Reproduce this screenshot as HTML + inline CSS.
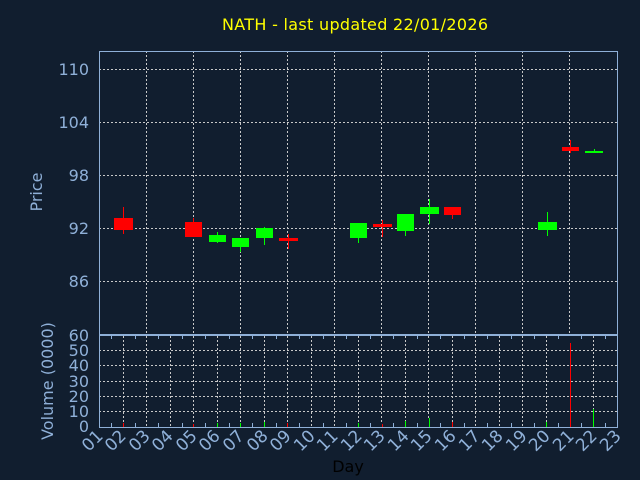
<html><body style="margin:0;background:#111e2f">
<svg width="640" height="480" xmlns="http://www.w3.org/2000/svg" style="display:block">
<rect width="640" height="480" fill="#111e2f"/>
<g stroke="#c8c8c8" stroke-dasharray="2,2" stroke-width="1">
<line x1="99" x2="617" y1="69.5" y2="69.5"/><line x1="99" x2="617" y1="122.5" y2="122.5"/><line x1="99" x2="617" y1="175.5" y2="175.5"/><line x1="99" x2="617" y1="228.5" y2="228.5"/><line x1="99" x2="617" y1="281.5" y2="281.5"/>
<line x1="99" x2="617" y1="350.5" y2="350.5"/><line x1="99" x2="617" y1="365.5" y2="365.5"/><line x1="99" x2="617" y1="381.5" y2="381.5"/><line x1="99" x2="617" y1="396.5" y2="396.5"/><line x1="99" x2="617" y1="411.5" y2="411.5"/>
<line x1="146.5" x2="146.5" y1="51" y2="334"/><line x1="193.5" x2="193.5" y1="51" y2="334"/><line x1="240.5" x2="240.5" y1="51" y2="334"/><line x1="287.5" x2="287.5" y1="51" y2="334"/><line x1="334.5" x2="334.5" y1="51" y2="334"/><line x1="381.5" x2="381.5" y1="51" y2="334"/><line x1="428.5" x2="428.5" y1="51" y2="334"/><line x1="475.5" x2="475.5" y1="51" y2="334"/><line x1="522.5" x2="522.5" y1="51" y2="334"/><line x1="569.5" x2="569.5" y1="51" y2="334"/>
<line x1="123.5" x2="123.5" y1="336" y2="427"/><line x1="146.5" x2="146.5" y1="336" y2="427"/><line x1="170.5" x2="170.5" y1="336" y2="427"/><line x1="193.5" x2="193.5" y1="336" y2="423"/><line x1="217.5" x2="217.5" y1="336" y2="423"/><line x1="240.5" x2="240.5" y1="336" y2="423"/><line x1="264.5" x2="264.5" y1="336" y2="422"/><line x1="287.5" x2="287.5" y1="336" y2="423"/><line x1="311.5" x2="311.5" y1="336" y2="427"/><line x1="334.5" x2="334.5" y1="336" y2="427"/><line x1="358.5" x2="358.5" y1="336" y2="423"/><line x1="381.5" x2="381.5" y1="336" y2="424"/><line x1="405.5" x2="405.5" y1="336" y2="421"/><line x1="428.5" x2="428.5" y1="336" y2="418"/><line x1="452.5" x2="452.5" y1="336" y2="422"/><line x1="475.5" x2="475.5" y1="336" y2="427"/><line x1="499.5" x2="499.5" y1="336" y2="427"/><line x1="522.5" x2="522.5" y1="336" y2="427"/><line x1="546.5" x2="546.5" y1="336" y2="422"/><line x1="593.5" x2="593.5" y1="336" y2="409"/>
</g>
<g fill="none" stroke="#8fb0d8" stroke-width="1">
<rect x="99.5" y="51.5" width="518" height="283"/>
<rect x="99.5" y="335.5" width="518" height="92"/>
</g>
<g stroke="#8fb0d8" stroke-width="1">
<path d="M111.5 335v4M135.5 335v4M158.5 335v4M182.5 335v4M205.5 335v4M229.5 335v4M252.5 335v4M276.5 335v4M299.5 335v4M323.5 335v4M346.5 335v4M370.5 335v4M393.5 335v4M417.5 335v4M440.5 335v4M464.5 335v4M487.5 335v4M511.5 335v4M534.5 335v4M558.5 335v4M581.5 335v4M605.5 335v4M111.5 427v-4M135.5 427v-4M158.5 427v-4M182.5 427v-4M205.5 427v-4M229.5 427v-4M252.5 427v-4M276.5 427v-4M299.5 427v-4M323.5 427v-4M346.5 427v-4M370.5 427v-4M393.5 427v-4M417.5 427v-4M440.5 427v-4M464.5 427v-4M487.5 427v-4M511.5 427v-4M534.5 427v-4M558.5 427v-4M581.5 427v-4M605.5 427v-4"/>
</g>
<g fill="#ff0000" stroke="#ff0000">
<line x1="123.5" x2="123.5" y1="207" y2="234"/><rect x="114" y="218" width="19" height="12" stroke="none"/>
<line x1="193.5" x2="193.5" y1="218" y2="237"/><rect x="185" y="222" width="17" height="15" stroke="none"/>
<line x1="288.5" x2="288.5" y1="234" y2="249"/><rect x="279" y="238" width="19" height="3" stroke="none"/>
<line x1="382.5" x2="382.5" y1="220" y2="237"/><rect x="373" y="224" width="19" height="3" stroke="none"/>
<line x1="452.5" x2="452.5" y1="207" y2="219"/><rect x="444" y="207" width="17" height="8" stroke="none"/>
<line x1="570.5" x2="570.5" y1="140" y2="153"/><rect x="562" y="147" width="17" height="4" stroke="none"/>
</g>
<g fill="#00ff00" stroke="#00ff00">
<line x1="217.5" x2="217.5" y1="232" y2="243"/><rect x="209" y="235" width="17" height="7" stroke="none"/>
<line x1="240.5" x2="240.5" y1="238" y2="252"/><rect x="232" y="238" width="17" height="9" stroke="none"/>
<line x1="264.5" x2="264.5" y1="227" y2="245"/><rect x="256" y="228" width="17" height="10" stroke="none"/>
<line x1="358.5" x2="358.5" y1="223" y2="243"/><rect x="350" y="223" width="17" height="15" stroke="none"/>
<line x1="405.5" x2="405.5" y1="214" y2="236"/><rect x="397" y="214" width="17" height="17" stroke="none"/>
<line x1="429.5" x2="429.5" y1="199" y2="224"/><rect x="420" y="207" width="19" height="7" stroke="none"/>
<line x1="547.5" x2="547.5" y1="212" y2="236"/><rect x="538" y="222" width="19" height="8" stroke="none"/>
<line x1="594.5" x2="594.5" y1="149" y2="153"/><rect x="585" y="151" width="18" height="2" stroke="none"/>
</g>
<g stroke-width="1">
<line x1="123.5" x2="123.5" y1="423" y2="427" stroke="#f00"/>
<line x1="193.5" x2="193.5" y1="424" y2="427" stroke="#f00"/>
<line x1="217.5" x2="217.5" y1="423" y2="427" stroke="#0f0"/>
<line x1="240.5" x2="240.5" y1="423" y2="427" stroke="#0f0"/>
<line x1="264.5" x2="264.5" y1="422" y2="427" stroke="#0f0"/>
<line x1="287.5" x2="287.5" y1="423" y2="427" stroke="#f00"/>
<line x1="358.5" x2="358.5" y1="423" y2="427" stroke="#0f0"/>
<line x1="382.5" x2="382.5" y1="424" y2="427" stroke="#f00"/>
<line x1="405.5" x2="405.5" y1="421" y2="427" stroke="#0f0"/>
<line x1="429.5" x2="429.5" y1="418" y2="427" stroke="#0f0"/>
<line x1="452.5" x2="452.5" y1="422" y2="427" stroke="#f00"/>
<line x1="546.5" x2="546.5" y1="422" y2="427" stroke="#0f0"/>
<line x1="570.5" x2="570.5" y1="343" y2="427" stroke="#f00"/>
<line x1="593.5" x2="593.5" y1="409" y2="427" stroke="#0f0"/>
</g>
<g font-family="DejaVu Sans, sans-serif" fill="#8fb0d8" font-size="16" text-anchor="end">
<text x="89" y="75">110</text><text x="89" y="128">104</text><text x="89" y="181">98</text><text x="89" y="234">92</text><text x="89" y="287">86</text>
<text x="89" y="341">60</text><text x="89" y="356">50</text><text x="89" y="371">40</text><text x="89" y="387">30</text><text x="89" y="402">20</text><text x="89" y="417">10</text><text x="89" y="432">0</text>
</g>
<g font-family="DejaVu Sans, sans-serif" fill="#8fb0d8" font-size="17" text-anchor="end">
<text transform="translate(104,437) rotate(-45)">01</text><text transform="translate(127,437) rotate(-45)">02</text><text transform="translate(151,437) rotate(-45)">03</text><text transform="translate(174,437) rotate(-45)">04</text><text transform="translate(198,437) rotate(-45)">05</text><text transform="translate(221,437) rotate(-45)">06</text><text transform="translate(245,437) rotate(-45)">07</text><text transform="translate(269,437) rotate(-45)">08</text><text transform="translate(292,437) rotate(-45)">09</text><text transform="translate(316,437) rotate(-45)">10</text><text transform="translate(339,437) rotate(-45)">11</text><text transform="translate(363,437) rotate(-45)">12</text><text transform="translate(386,437) rotate(-45)">13</text><text transform="translate(410,437) rotate(-45)">14</text><text transform="translate(433,437) rotate(-45)">15</text><text transform="translate(457,437) rotate(-45)">16</text><text transform="translate(481,437) rotate(-45)">17</text><text transform="translate(504,437) rotate(-45)">18</text><text transform="translate(528,437) rotate(-45)">19</text><text transform="translate(551,437) rotate(-45)">20</text><text transform="translate(575,437) rotate(-45)">21</text><text transform="translate(598,437) rotate(-45)">22</text><text transform="translate(622,437) rotate(-45)">23</text>
</g>
<g font-family="DejaVu Sans, sans-serif" font-size="16" text-anchor="middle">
<text x="355" y="30" fill="#ffff00" textLength="266">NATH - last updated 22/01/2026</text>
<text x="348" y="472" fill="#000">Day</text>
<text transform="translate(42,192) rotate(-90)" fill="#8fb0d8">Price</text>
<text transform="translate(53,381) rotate(-90)" fill="#8fb0d8">Volume (0000)</text>
</g>
</svg>
</body></html>
